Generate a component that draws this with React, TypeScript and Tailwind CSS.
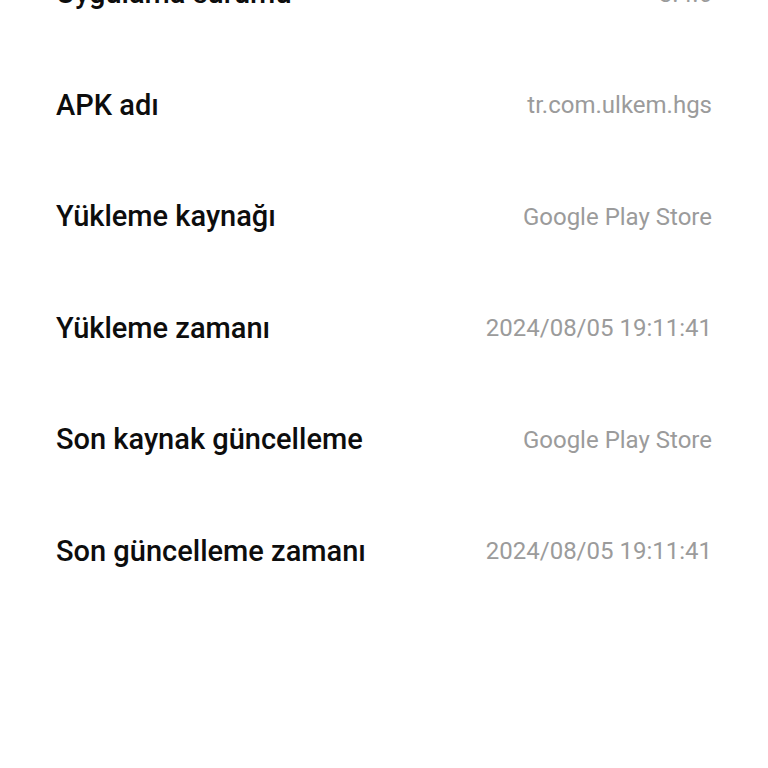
import React from "react";

interface InfoRow {
  label: string;
  value: string;
}

const rows: InfoRow[] = [
  { label: "Uygulama sürümü", value: "3.4.6" },
  { label: "APK adı", value: "tr.com.ulkem.hgs" },
  { label: "Yükleme kaynağı", value: "Google Play Store" },
  { label: "Yükleme zamanı", value: "2024/08/05 19:11:41" },
  { label: "Son kaynak güncelleme", value: "Google Play Store" },
  { label: "Son güncelleme zamanı", value: "2024/08/05 19:11:41" },
];

export default function App() {
  return (
    <div
      className="w-[768px] h-[768px] overflow-hidden bg-white"
      style={{ fontFamily: "Roboto, 'Noto Sans', sans-serif" }}
    >
      {/* App details list, first row scrolled partly out of view */}
      <div className="-mt-[62px] flex flex-col px-[56px]">
        {rows.map((row) => (
          <div key={row.label} className="h-[111.5px] flex items-center justify-between">
            <span className="text-[29px] font-medium text-[#0d0d0d]">{row.label}</span>
            <span className="text-[24px] text-[#9b9b9b]">{row.value}</span>
          </div>
        ))}
      </div>
    </div>
  );
}
